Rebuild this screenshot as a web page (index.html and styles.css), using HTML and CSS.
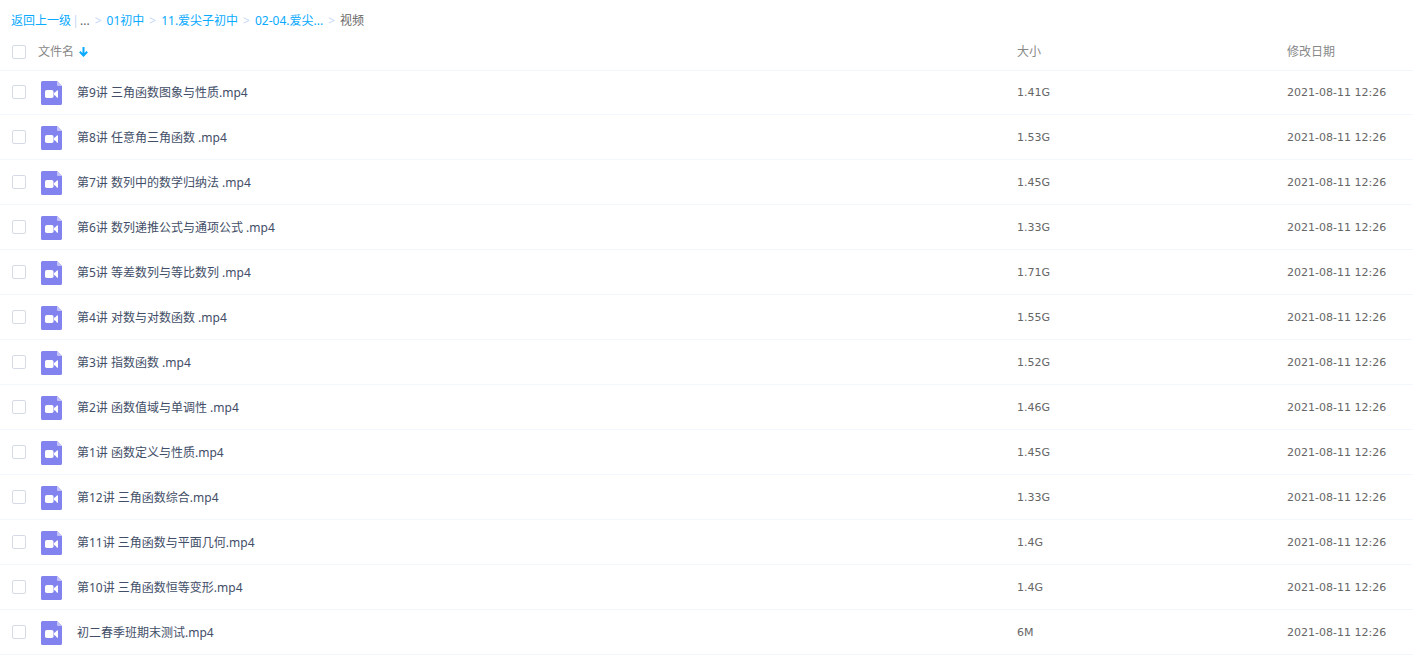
FILE: index.html
```html
<!DOCTYPE html>
<html lang="zh-CN">
<head>
  <meta charset="UTF-8" />
  <meta name="viewport" content="width=device-width, initial-scale=1.0"/>
  <title>视频</title>
  <link rel="stylesheet" href="styles.css">
</head>
<body>

  <svg class="sprite" aria-hidden="true">
    <symbol id="icon-video" viewBox="0 0 21 24">
      <path fill="#8283ef" d="M1.500 0H16l5 5v17.500a1.500 1.500 0 0 1-1.500 1.500h-18A1.500 1.500 0 0 1 0 22.500v-21A1.500 1.500 0 0 1 1.500 0z"/>
      <path fill="#c4c4fa" d="M16 0l5 5h-4a1 1 0 0 1-1-1z"/>
      <rect fill="#fff" x="4" y="9" width="8.500" height="8" rx="1.800"/>
      <path fill="#fff" d="M13 12q1.600-.6 2.600-2.200q.5-.5 1.400-.5v7.400q-.9 0-1.400-.5Q14.600 14.600 13 14z"/>
    </symbol>
  </svg>

  <nav class="breadcrumb">
    <a href="#back">返回上一级</a>
    <span class="divider">|</span>
    <span class="more">...</span>
    <span class="sep">&gt;</span>
    <a href="#grade">01初中</a>
    <span class="sep">&gt;</span>
    <a href="#course">11.爱尖子初中</a>
    <span class="sep">&gt;</span>
    <a href="#unit">02-04.爱尖...</a>
    <span class="sep">&gt;</span>
    <span>视频</span>
  </nav>

  <table class="file-table">
    <thead>
      <tr>
        <th class="col-name">
          <div class="head-cell">
            <input type="checkbox" id="check-all" aria-label="全选" />
            <span class="head-label">文件名</span>
            <svg class="sort" width="9" height="10" viewBox="0 0 9 10" fill="none" stroke="#09aaff" stroke-width="2"><path d="M4.500 0v8M.8 4.800l3.700 3.700 3.700-3.700"/></svg>
          </div>
        </th>
        <th class="col-size">大小</th>
        <th class="col-date">修改日期</th>
      </tr>
    </thead>
    <tbody id="file-list">
      <!-- Files will be displayed here -->
    </tbody>
  </table>

  <script>
    const fileList = document.getElementById('file-list');
    const checkAll = document.getElementById('check-all');
    const date = '2021-08-11 12:26';

    const files = [
      { name: '第9讲 三角函数图象与性质.mp4', size: '1.41G' },
      { name: '第8讲 任意角三角函数 .mp4', size: '1.53G' },
      { name: '第7讲 数列中的数学归纳法 .mp4', size: '1.45G' },
      { name: '第6讲 数列递推公式与通项公式 .mp4', size: '1.33G' },
      { name: '第5讲 等差数列与等比数列 .mp4', size: '1.71G' },
      { name: '第4讲 对数与对数函数 .mp4', size: '1.55G' },
      { name: '第3讲 指数函数 .mp4', size: '1.52G' },
      { name: '第2讲 函数值域与单调性 .mp4', size: '1.46G' },
      { name: '第1讲 函数定义与性质.mp4', size: '1.45G' },
      { name: '第12讲 三角函数综合.mp4', size: '1.33G' },
      { name: '第11讲 三角函数与平面几何.mp4', size: '1.4G' },
      { name: '第10讲 三角函数恒等变形.mp4', size: '1.4G' },
      { name: '初二春季班期末测试.mp4', size: '6M' }
    ];

    files.forEach((file, index) => {
      const row = document.createElement('tr');
      row.innerHTML = `
        <td>
          <div class="file-cell">
            <input type="checkbox" class="file-check" id="file-${index}" />
            <svg class="file-icon" width="21" height="24" aria-hidden="true"><use href="#icon-video"/></svg>
            <label for="file-${index}">${file.name}</label>
          </div>
        </td>
        <td class="meta">${file.size}</td>
        <td class="meta">${date}</td>
      `;
      fileList.appendChild(row);
    });

    checkAll.addEventListener('change', function() {
      document.querySelectorAll('.file-check').forEach(box => {
        box.checked = checkAll.checked;
      });
    });
  </script>

</body>
</html>
```
FILE: styles.css
```css
body {
  margin: 0;
  font-family: "Noto Sans", "Noto Sans CJK SC", sans-serif;
  font-size: 12px;
  line-height: 18px;
  color: #424e67;
  background-color: #fff;
}
.sprite {
  display: none;
}
.breadcrumb {
  display: flex;
  padding: 12px 11px 4px;
  color: #666;
  white-space: nowrap;
}
.breadcrumb a {
  color: #09aaff;
  text-decoration: none;
}
.breadcrumb a:hover {
  text-decoration: underline;
}
.divider {
  width: 9px;
  text-align: center;
  color: #c4d8f6;
}
.sep {
  margin: 0 5px;
  color: #c4d8f6;
}
.file-table {
  width: 100%;
  table-layout: fixed;
  border-collapse: separate;
  border-spacing: 0;
}
th {
  height: 36px;
  padding: 0;
  font-weight: normal;
  text-align: left;
  color: #888;
}
td {
  box-sizing: border-box;
  height: 45px;
  padding: 2px 0 0;
  border-bottom: 1px solid #f2f6fd;
}
tbody tr:first-child td {
  padding-top: 0;
  border-top: 1px solid #f2f6fd;
}
tbody tr:hover {
  background-color: #f4fbff;
}
.col-size {
  width: 270px;
}
.col-date {
  width: 126px;
}
.head-cell,
.file-cell {
  display: flex;
  align-items: center;
  padding-left: 12px;
}
.head-label {
  margin: 0 5px 0 12px;
}
.file-icon {
  margin: 0 15px;
}
.meta {
  font-family: "DejaVu Sans", sans-serif;
  font-size: 11px;
  color: #666;
}
input[type="checkbox"] {
  appearance: none;
  flex: none;
  box-sizing: border-box;
  width: 14px;
  height: 14px;
  margin: 0;
  border: 1px solid #d5dbe5;
  border-radius: 2px;
  background-color: #fff;
}
input[type="checkbox"].file-check {
  margin-bottom: 2px;
}
input[type="checkbox"]:checked {
  border-color: #09aaff;
  background-color: #09aaff;
}
```
